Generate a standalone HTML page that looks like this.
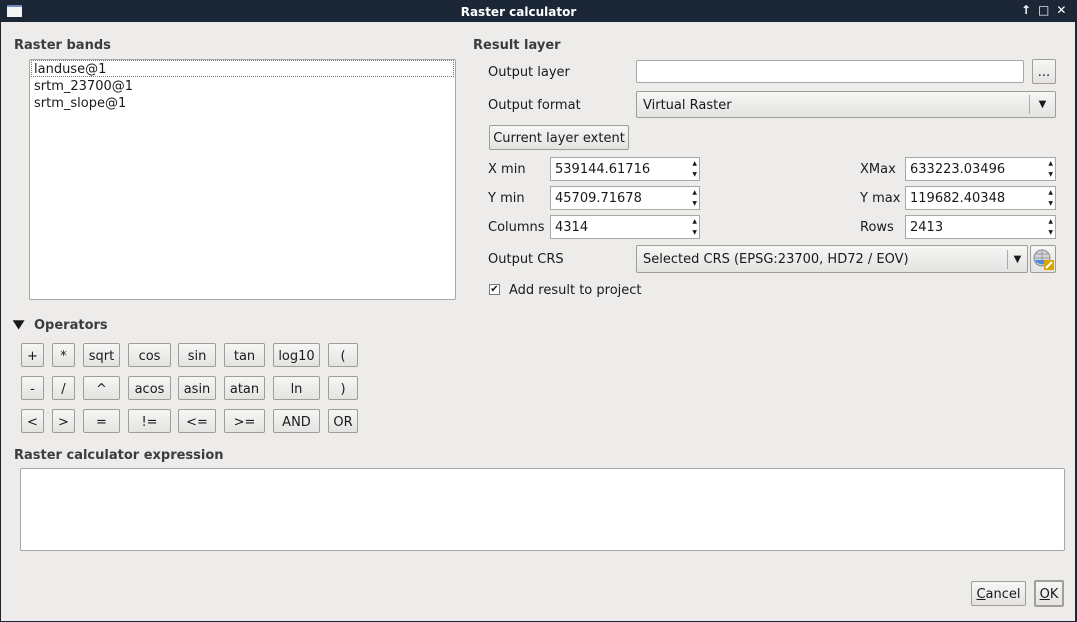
<!DOCTYPE html><html><head><style>
*{box-sizing:border-box;margin:0;padding:0}
body{width:1077px;height:622px;position:relative;overflow:hidden;background:#edeceb;font-family:"DejaVu Sans","Liberation Sans",sans-serif;font-size:13px;color:#1a1a1a}
.a{position:absolute}
.l{margin-top:2px}
.title{left:0;top:0;width:1077px;height:22px;background:#1b2737;color:#fff;font-weight:bold;text-align:center;line-height:25px;font-size:12px;padding-right:40px}
.frame{left:0;top:22px;width:1077px;height:600px;border:1px solid #1b2737;border-top:none;border-right:2px solid #1b2737}
.h{font-weight:bold;color:#3c3c3c;margin-top:2px}
.b{border:1px solid #9e9d99;border-radius:2px;background:linear-gradient(#f6f6f5,#e4e3e1);text-align:center;line-height:25px;height:24px}
.in{background:#fff;border:1px solid #a8a7a3;border-radius:2px}
.sp{background:#fff;border:1px solid #a8a7a3;height:24px;line-height:24px;padding-left:4px}
.ar{position:absolute;right:2px;font-size:6px;line-height:6px}
</style></head><body>
<div class="a title">Raster calculator</div>
<div class="a" style="left:7px;top:5px;width:15px;height:12px;background:#f4f4f4;border-top:2px solid #6a8ac0"></div>
<div class="a" style="left:1021px;top:3px;color:#fff;font-size:12px;font-weight:bold;letter-spacing:7px">↑□✕</div>
<div class="a frame"></div>
<div class="a h" style="left:14px;top:36px">Raster bands</div>
<div class="a in" style="left:29px;top:59px;width:427px;height:241px"></div>
<div class="a" style="left:31px;top:60px;width:423px;height:17px;border:1px dotted #777"></div>
<div class="a" style="left:34px;top:61px;line-height:17px">landuse@1<br>srtm_23700@1<br>srtm_slope@1</div>
<div class="a h" style="left:473px;top:36px">Result layer</div>
<div class="a l" style="left:488px;top:63px">Output layer</div>
<div class="a in" style="left:636px;top:60px;width:388px;height:23px"></div>
<div class="a b" style="left:1032px;top:59px;width:24px;height:25px">...</div>
<div class="a l" style="left:488px;top:96px">Output format</div>
<div class="a b" style="left:636px;top:91px;width:420px;height:27px;text-align:left;padding-left:6px;line-height:27px">Virtual Raster<span class="a" style="right:0;top:3px;width:26px;height:19px;border-left:1px solid #aaa;text-align:center;line-height:19px;font-size:10px">▼</span></div>
<div class="a b" style="left:489px;top:125px;width:140px;height:25px;line-height:26px">Current layer extent</div>
<div class="a l" style="left:488px;top:160px">X min</div>
<div class="a sp" style="left:550px;top:157px;width:150px">539144.61716<span class="ar" style="top:3px">▲</span><span class="ar" style="top:14px">▼</span></div>
<div class="a l" style="left:860px;top:160px">XMax</div>
<div class="a sp" style="left:905px;top:157px;width:151px">633223.03496<span class="ar" style="top:3px">▲</span><span class="ar" style="top:14px">▼</span></div>
<div class="a l" style="left:488px;top:189px">Y min</div>
<div class="a sp" style="left:550px;top:186px;width:150px">45709.71678<span class="ar" style="top:3px">▲</span><span class="ar" style="top:14px">▼</span></div>
<div class="a l" style="left:860px;top:189px">Y max</div>
<div class="a sp" style="left:905px;top:186px;width:151px">119682.40348<span class="ar" style="top:3px">▲</span><span class="ar" style="top:14px">▼</span></div>
<div class="a l" style="left:488px;top:218px">Columns</div>
<div class="a sp" style="left:550px;top:215px;width:150px">4314<span class="ar" style="top:3px">▲</span><span class="ar" style="top:14px">▼</span></div>
<div class="a l" style="left:860px;top:218px">Rows</div>
<div class="a sp" style="left:905px;top:215px;width:151px">2413<span class="ar" style="top:3px">▲</span><span class="ar" style="top:14px">▼</span></div>
<div class="a l" style="left:488px;top:250px">Output CRS</div>
<div class="a b" style="left:636px;top:245px;width:392px;height:28px;text-align:left;padding-left:6px;line-height:28px">Selected CRS (EPSG:23700, HD72 / EOV)<span class="a" style="right:0;top:4px;width:20px;height:19px;border-left:1px solid #aaa;text-align:center;line-height:19px;font-size:10px">▼</span></div>
<div class="a b" style="left:1030px;top:245px;width:26px;height:28px"><svg width="24" height="26" style="position:absolute;left:0;top:0"><circle cx="11" cy="12" r="8" fill="#cfd6df" stroke="#888"/><path d="M3 12h16M11 4v16M5 8h12M5 16h12" stroke="#999" fill="none"/><path d="M4 14a8 8 0 0 0 14 0z" fill="#4a8ad8"/><rect x="13" y="14" width="10" height="10" fill="#d8a400"/><path d="M15 22l6-6" stroke="#fff" stroke-width="2"/></svg></div>
<div class="a" style="left:489px;top:284px;width:11px;height:11px;border:1px solid #777;background:#fff;font-size:10px;line-height:9px;text-align:center">✔</div>
<div class="a l" style="left:509px;top:281px">Add result to project</div>
<div class="a" style="left:14px;top:317px;font-size:12px;transform:scaleX(1.3)">▼</div>
<div class="a h" style="left:34px;top:316px">Operators</div>
<div class="a b" style="left:21px;top:343px;width:23px">+</div>
<div class="a b" style="left:52px;top:343px;width:23px">*</div>
<div class="a b" style="left:83px;top:343px;width:37px">sqrt</div>
<div class="a b" style="left:128px;top:343px;width:43px">cos</div>
<div class="a b" style="left:178px;top:343px;width:38px">sin</div>
<div class="a b" style="left:224px;top:343px;width:41px">tan</div>
<div class="a b" style="left:273px;top:343px;width:47px">log10</div>
<div class="a b" style="left:328px;top:343px;width:30px">(</div>
<div class="a b" style="left:21px;top:376px;width:23px">-</div>
<div class="a b" style="left:52px;top:376px;width:23px">/</div>
<div class="a b" style="left:83px;top:376px;width:37px">^</div>
<div class="a b" style="left:128px;top:376px;width:43px">acos</div>
<div class="a b" style="left:178px;top:376px;width:38px">asin</div>
<div class="a b" style="left:224px;top:376px;width:41px">atan</div>
<div class="a b" style="left:273px;top:376px;width:47px">ln</div>
<div class="a b" style="left:328px;top:376px;width:30px">)</div>
<div class="a b" style="left:21px;top:409px;width:23px">&lt;</div>
<div class="a b" style="left:52px;top:409px;width:23px">&gt;</div>
<div class="a b" style="left:83px;top:409px;width:37px">=</div>
<div class="a b" style="left:128px;top:409px;width:43px">!=</div>
<div class="a b" style="left:178px;top:409px;width:38px">&lt;=</div>
<div class="a b" style="left:224px;top:409px;width:41px">&gt;=</div>
<div class="a b" style="left:273px;top:409px;width:47px">AND</div>
<div class="a b" style="left:328px;top:409px;width:30px">OR</div>
<div class="a h" style="left:14px;top:446px">Raster calculator expression</div>
<div class="a in" style="left:20px;top:468px;width:1045px;height:83px"></div>
<div class="a b" style="left:971px;top:581px;width:55px;height:25px;line-height:26px"><u>C</u>ancel</div>
<div class="a b" style="left:1034px;top:580px;width:30px;height:27px;border:2px solid #a09f9b;line-height:26px"><u>O</u>K</div>
</body></html>
